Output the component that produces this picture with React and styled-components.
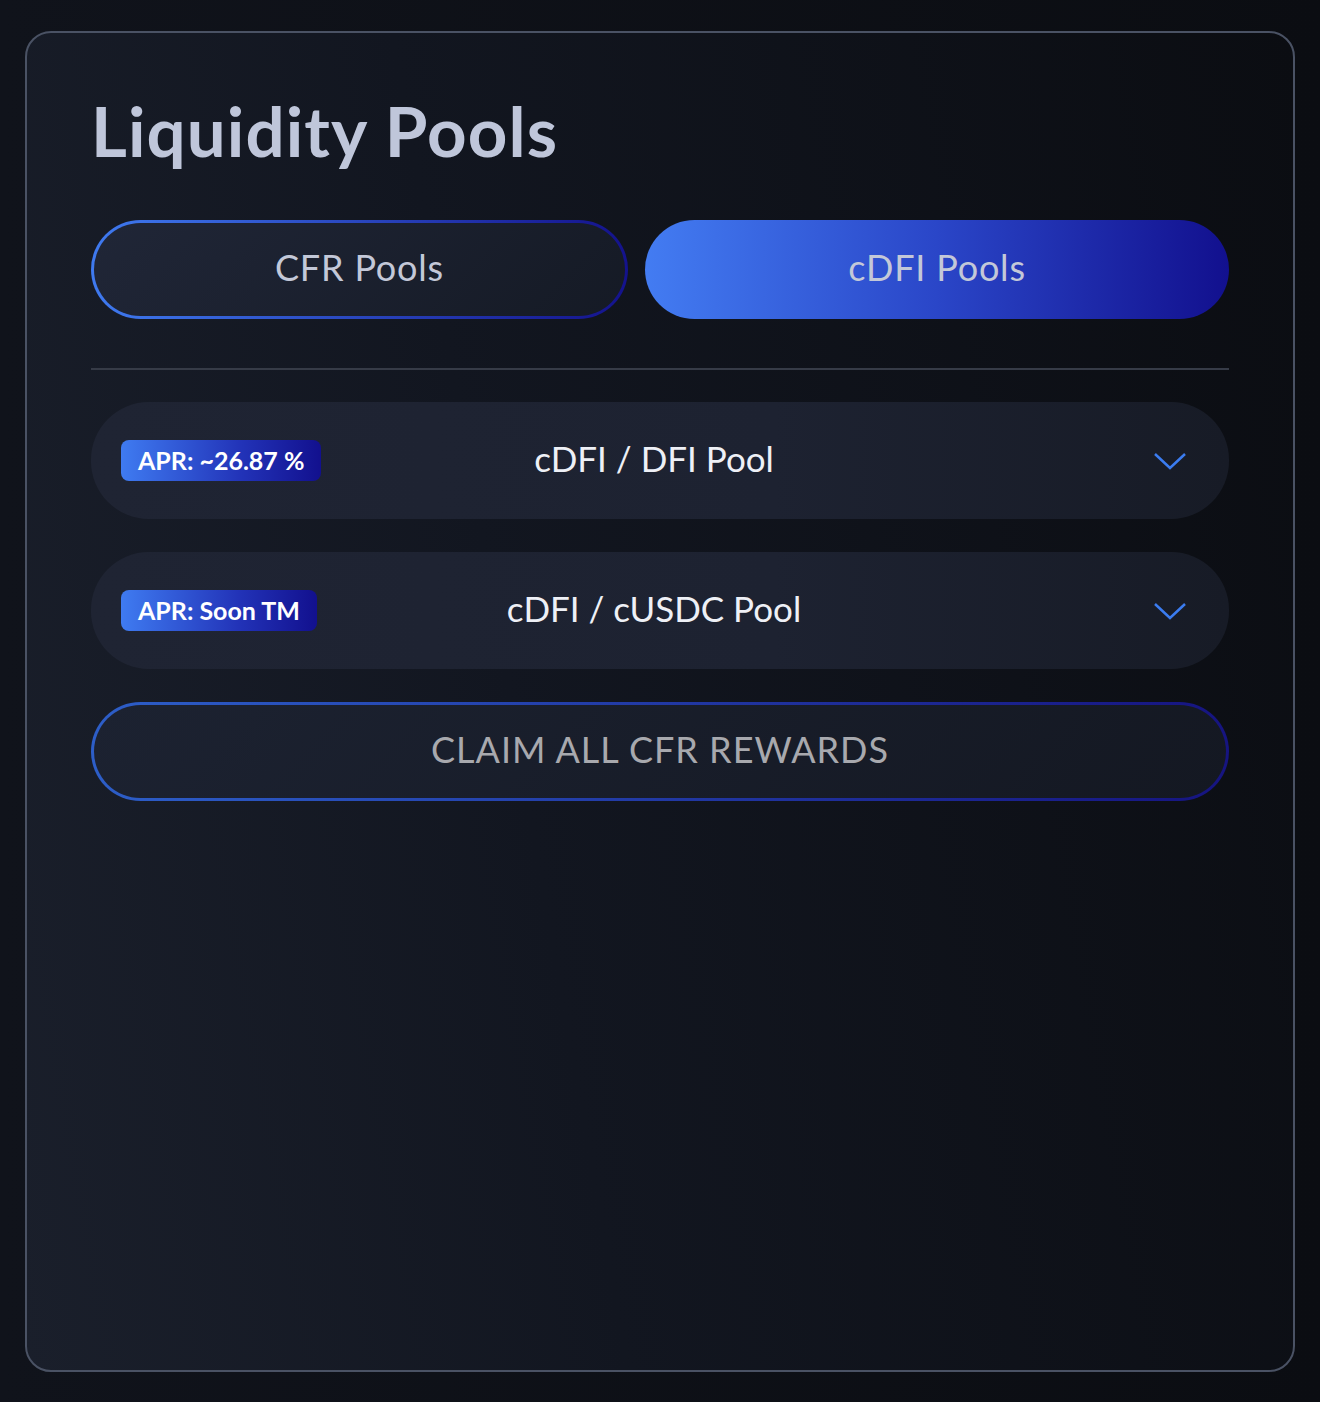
import React from 'react';
import styled, { createGlobalStyle } from 'styled-components';

const GlobalStyle = createGlobalStyle`
	html, body {
		margin: 0;
		padding: 0;
		background: #0c0f15;
		font-family: Lato, "Noto Sans", sans-serif;
	}
`

const Page = styled.div`
	padding: 31px 25px 30px 25px;
	min-height: 1402px;
	box-sizing: border-box;
	background: linear-gradient(90deg, #10131b 0%, #0b0d12 100%);
`
const Card = styled.div`
	height: 1341px;
	box-sizing: border-box;
	border: 2px solid #4a5264;
	border-radius: 26px;
	padding: 55px 64px 0 64px;
	background: linear-gradient(80deg, #1a1f2b 0%, #121620 40%, #0b0d12 100%);
`
const Title = styled.h1`
	margin: 0 0 46px 0;
	font-size: 69px;
	font-weight: 700;
	line-height: 86px;
	color: #bfc6da;
	letter-spacing: 1.1px;
`
const Tabs = styled.div`
	display: grid;
	grid-template-columns: 537px 1fr;
	gap: 17px;
`
const Tab = styled.button`
	height: 99px;
	padding: 0 0 6px 0;
	border-radius: 50px;
	font-family: inherit;
	font-size: 36px;
	letter-spacing: 0.8px;
	color: #c3c8d8;
	cursor: pointer;
	box-sizing: border-box;
	border: ${props => props.active ? 'none' : '3px solid transparent'};
	background: ${props => props.active
		? 'linear-gradient(90deg, #437cf2 0%, #2a46c8 50%, #12108e 100%)'
		: 'linear-gradient(135deg, #202637, #151a25) padding-box, linear-gradient(90deg, #3f7af0, #14128c) border-box'};
`
const Divider = styled.hr`
	margin: 49px 0 32px 0;
	border: none;
	height: 2px;
	background: #363b47;
`
const Rows = styled.div`
	display: flex;
	flex-direction: column;
	gap: 33px;
`
const Row = styled.div`
	height: 117px;
	border-radius: 58px;
	background: linear-gradient(90deg, #1f2433 0%, #1d2231 60%, #171b26 100%);
	display: grid;
	grid-template-columns: 1fr auto 1fr;
	align-items: center;
	padding: 0 42px 0 30px;
	box-sizing: border-box;
`
const Badge = styled.span`
	justify-self: start;
	background: linear-gradient(90deg, #3f7bf1 0%, #2233b8 60%, #12108e 100%);
	color: #ffffff;
	font-size: 25px;
	font-weight: 700;
	line-height: 41px;
	padding: 0 17px;
	border-radius: 8px;
`
const PoolName = styled.span`
	font-size: 35px;
	color: #eef0f6;
	padding-bottom: 6px;
`
const Chevron = styled.svg`
	justify-self: end;
	width: 34px;
	height: 20px;
`
const Claim = styled.button`
	margin-top: 33px;
	width: 100%;
	height: 99px;
	padding: 0 0 6px 0;
	border-radius: 50px;
	font-family: inherit;
	font-size: 36px;
	letter-spacing: 1px;
	color: #a8a9ae;
	box-sizing: border-box;
	border: 3px solid transparent;
	background: linear-gradient(135deg, #1c2231, #141822) padding-box, linear-gradient(90deg, #2d5ec8, #161480) border-box;
`

const pools = [
	{ apr: 'APR: ~26.87 %', name: 'cDFI / DFI Pool' },
	{ apr: 'APR: Soon TM', name: 'cDFI / cUSDC Pool' },
]

export default function App() {
	return (
		<>
			<GlobalStyle />
			<Page>
				<Card>
					<Title>Liquidity Pools</Title>
					<Tabs>
						<Tab>CFR Pools</Tab>
						<Tab active>cDFI Pools</Tab>
					</Tabs>
					<Divider />
					<Rows>
						{pools.map(p => (
							<Row key={p.name}>
								<Badge>{p.apr}</Badge>
								<PoolName>{p.name}</PoolName>
								<Chevron viewBox="0 0 34 20">
									<path d="M2 3 L17 17 L32 3" fill="none" stroke="#3b7cf0" strokeWidth="2.5" />
								</Chevron>
							</Row>
						))}
					</Rows>
					<Claim>CLAIM ALL CFR REWARDS</Claim>
				</Card>
			</Page>
		</>
	)
}
